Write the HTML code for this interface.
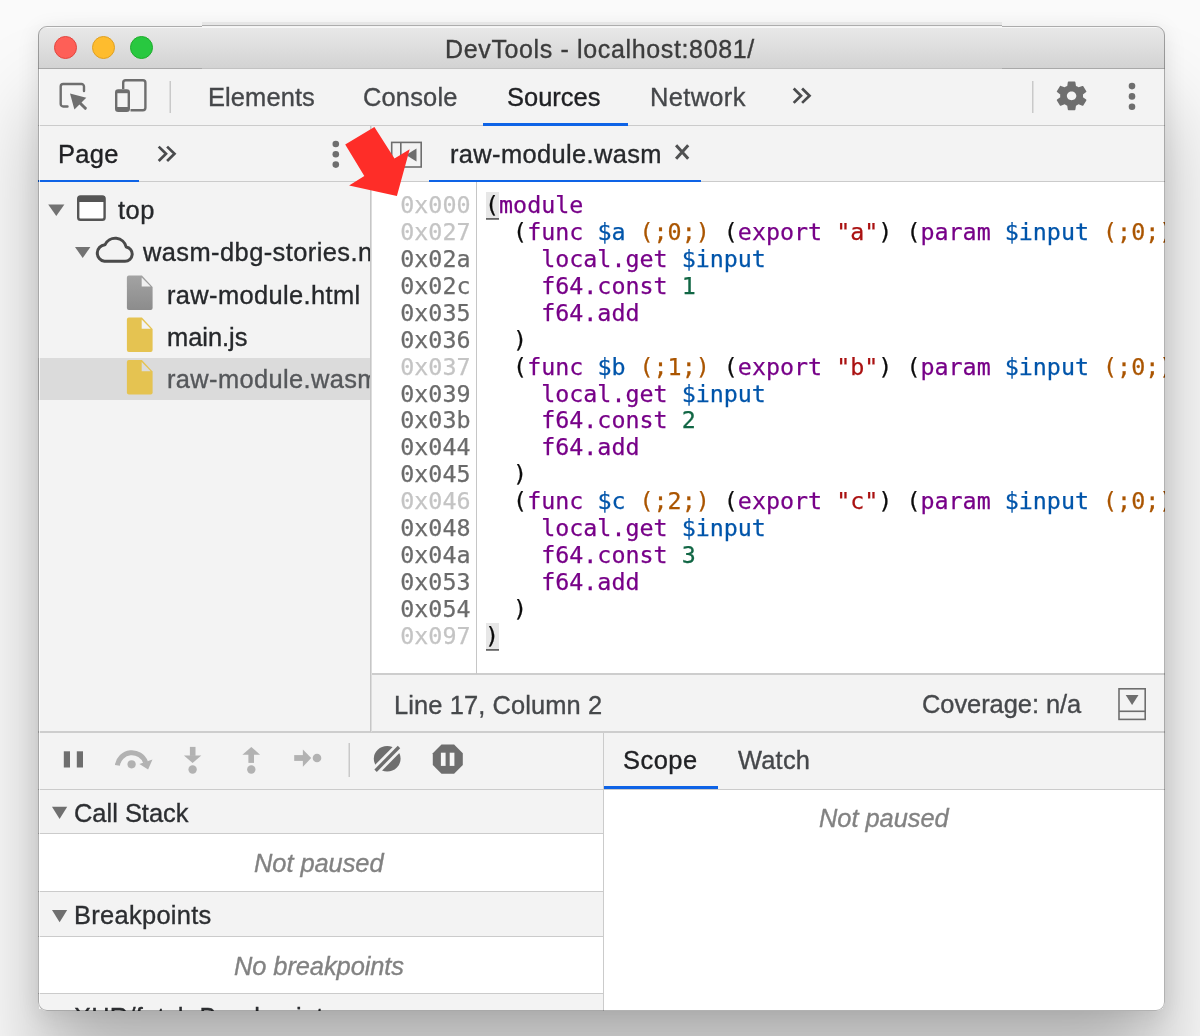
<!DOCTYPE html>
<html lang="en">
<head>
<meta charset="utf-8">
<title>DevTools - localhost:8081/</title>
<style>
html,body{margin:0;padding:0;}
body{width:1200px;height:1036px;overflow:hidden;background:#fafafa;position:relative;
  font-family:"Liberation Sans",Arial,sans-serif;font-size:25.45px;color:#333;}
.abs{position:absolute;}
#shadow{position:absolute;left:38px;top:26px;width:1127px;height:985px;border-radius:9px;
  box-shadow:0 5px 22px 0 rgba(0,0,0,0.10),0 80px 86px 0 rgba(0,0,0,0.26);}
#frame{z-index:9;position:absolute;left:38px;top:26px;width:1127px;height:985px;border-radius:9px;box-sizing:border-box;border:1px solid rgba(0,0,0,0.30);pointer-events:none;}
#win{z-index:0;position:absolute;left:38px;top:26px;width:1127px;height:985px;border-radius:9px;overflow:hidden;background:#fff;}
#win>*{position:absolute;}
.t,.ln,.cl{will-change:transform;}
.t{-webkit-text-stroke:0.35px currentColor;}
.t{position:absolute;white-space:nowrap;line-height:30px;height:30px;}
#titlebar{left:0;top:0;width:1127px;height:42px;background:linear-gradient(#e9e9e9,#d3d3d3);border-bottom:1px solid #c2c2c2;box-shadow:inset 0 2px 0 #f7f7f7;}
.light{position:absolute;top:10px;width:23px;height:23px;border-radius:50%;box-sizing:border-box;}
#toolbar{left:0;top:43px;width:1127px;height:56px;background:#f3f3f3;border-bottom:1px solid #cbcbcb;}
#sidetabs{left:0;top:100px;width:332px;height:55px;background:#f3f3f3;border-bottom:1px solid #cbcbcb;}
#edtabs{left:333px;top:100px;width:794px;height:55px;background:#f3f3f3;border-bottom:1px solid #cbcbcb;}
#vdiv1{z-index:3;left:332px;top:100px;width:2px;height:606px;background:linear-gradient(90deg,#c6c6c6 50%,#dcdcdc 50%);}
#sidebar{left:0;top:156px;width:332px;height:550px;background:#f3f3f3;}
#editor{left:333px;top:156px;width:794px;height:492px;background:#fff;overflow:hidden;}
#gutterline{z-index:3;left:438px;top:156px;width:1px;height:492px;background:#c6c6c6;}
#status{left:333px;top:647px;width:794px;height:57px;background:#f3f3f3;border-top:2px solid #cdcdcd;}
#hdiv{left:0;top:705px;width:1127px;height:2px;background:#cdcdcd;}
#dbgbar{left:0;top:707px;width:565px;height:56px;background:#f3f3f3;border-bottom:1px solid #cbcbcb;}
#vdiv2{left:565px;top:707px;width:1px;height:300px;background:#cbcbcb;}
#scopetabs{left:566px;top:707px;width:561px;height:56px;background:#f3f3f3;border-bottom:1px solid #cbcbcb;}
#scope{left:566px;top:764px;width:561px;height:230px;background:#fff;}
#dbg{left:0;top:764px;width:565px;height:230px;background:#fff;}
.sec{position:absolute;left:0;width:565px;background:#f3f3f3;border-top:1px solid #cbcbcb;border-bottom:1px solid #cbcbcb;box-sizing:border-box;}
.it{font-style:italic;color:#828282;}
.blue{position:absolute;height:3px;background:#0e63e6;}
.mono{font-family:"DejaVu Sans Mono","Liberation Mono",monospace;font-size:23.33px;}
.ln,.cl{-webkit-text-stroke:0.25px currentColor;}
.ln{position:absolute;left:0;width:99.5px;text-align:right;white-space:pre;height:27px;line-height:27px;color:#6b6b6b;}
.ln.d{color:#c4c4c4;}
.cl{position:absolute;left:114px;white-space:pre;height:27px;line-height:27px;color:#0c0c0c;}
.bm{display:inline-block;height:28px;line-height:26.9px;vertical-align:top;background:linear-gradient(#666,#666) no-repeat 1px 100% / 13.2px 1.8px, linear-gradient(#e7e7e7,#e7e7e7) no-repeat 1px 0 / 13.2px 26.2px;}
.k{color:#708;}.v{color:#05a;}.c{color:#a50;}.s{color:#a11;}.n{color:#164;}
</style>
</head>
<body>
<div id="shadow"></div>
<div id="win">
  <div id="titlebar">
    <div class="light" style="left:16px;background:#fe5f57;border:1px solid #e2463f;"></div>
    <div class="light" style="left:54px;background:#febc2e;border:1px solid #dfa023;"></div>
    <div class="light" style="left:92px;background:#28c840;border:1px solid #1dad2b;"></div>
    <div class="t" id="title" style="font-size:25px;left:407.0px;top:7.8px;color:#3c3c3c;letter-spacing:0.64px;">DevTools - localhost:8081/</div>
  </div>
  <div id="toolbar">
    <div id="tElements" class="t" style="left:170.0px;top:12.7px;color:#45474a;letter-spacing:0.11px;">Elements</div>
    <div id="tConsole" class="t" style="left:325.1px;top:12.7px;color:#45474a;letter-spacing:0.17px;">Console</div>
    <div id="tSources" class="t" style="left:469.0px;top:12.7px;color:#202124;letter-spacing:0.01px;">Sources</div>
    <div id="tNetwork" class="t" style="left:612.0px;top:12.7px;color:#45474a;letter-spacing:0.35px;">Network</div>
    <div class="blue" style="left:445px;top:54px;width:145px;"></div>
  </div>
  <div id="sidetabs">
    <div id="tPage" class="t" style="left:19.5px;top:13.2px;color:#202124;letter-spacing:0.35px;">Page</div>
    <div class="blue" style="left:0;top:54px;width:101px;"></div>
  </div>
  <div id="edtabs">
    <div id="tTab" class="t" style="left:79.0px;top:13.0px;color:#26282b;letter-spacing:0.37px;">raw-module.wasm</div>
    <div class="blue" style="left:58px;top:54px;width:272px;"></div>
  </div>
  <div id="sidebar">
    <div class="abs" style="left:0;top:176px;width:332px;height:42px;background:#dbdbdb;"></div>
    <div id="tTop" class="t" style="left:80.0px;top:12.7px;letter-spacing:0.50px;color:#26282b;">top</div>
    <div id="tWasmDbg" class="t" style="left:105.2px;top:55.2px;letter-spacing:0.42px;color:#26282b;">wasm-dbg-stories.n</div>
    <div id="tHtml" class="t" style="left:129.0px;top:97.7px;letter-spacing:0.37px;color:#26282b;">raw-module.html</div>
    <div id="tMainjs" class="t" style="left:129.0px;top:139.9px;letter-spacing:-0.03px;color:#26282b;">main.js</div>
    <div id="tWasm2" class="t" style="left:129.0px;top:182.1px;color:#55575a;letter-spacing:0.37px;">raw-module.wasm</div>
  </div>
  <div id="editor" class="mono">
<!--CODE-->
    <div class="ln d" style="top:10.0px">0x000</div><div class="cl" style="top:10.0px"><span class="bm">(</span><span class="k">module</span></div>
    <div class="ln d" style="top:36.9px">0x027</div><div class="cl" style="top:36.9px">  (<span class="k">func</span> <span class="v">$a</span> <span class="c">(;0;)</span> (<span class="k">export</span> <span class="s">&quot;a&quot;</span>) (<span class="k">param</span> <span class="v">$input</span> <span class="c">(;0;)</span> <span class="k">f64</span>) (<span class="k">result</span> <span class="k">f64</span>)</div>
    <div class="ln" style="top:63.9px">0x02a</div><div class="cl" style="top:63.9px">    <span class="k">local.get</span> <span class="v">$input</span></div>
    <div class="ln" style="top:90.8px">0x02c</div><div class="cl" style="top:90.8px">    <span class="k">f64.const</span> <span class="n">1</span></div>
    <div class="ln" style="top:117.7px">0x035</div><div class="cl" style="top:117.7px">    <span class="k">f64.add</span></div>
    <div class="ln" style="top:144.7px">0x036</div><div class="cl" style="top:144.7px">  )</div>
    <div class="ln d" style="top:171.6px">0x037</div><div class="cl" style="top:171.6px">  (<span class="k">func</span> <span class="v">$b</span> <span class="c">(;1;)</span> (<span class="k">export</span> <span class="s">&quot;b&quot;</span>) (<span class="k">param</span> <span class="v">$input</span> <span class="c">(;0;)</span> <span class="k">f64</span>) (<span class="k">result</span> <span class="k">f64</span>)</div>
    <div class="ln" style="top:198.5px">0x039</div><div class="cl" style="top:198.5px">    <span class="k">local.get</span> <span class="v">$input</span></div>
    <div class="ln" style="top:225.4px">0x03b</div><div class="cl" style="top:225.4px">    <span class="k">f64.const</span> <span class="n">2</span></div>
    <div class="ln" style="top:252.4px">0x044</div><div class="cl" style="top:252.4px">    <span class="k">f64.add</span></div>
    <div class="ln" style="top:279.3px">0x045</div><div class="cl" style="top:279.3px">  )</div>
    <div class="ln d" style="top:306.2px">0x046</div><div class="cl" style="top:306.2px">  (<span class="k">func</span> <span class="v">$c</span> <span class="c">(;2;)</span> (<span class="k">export</span> <span class="s">&quot;c&quot;</span>) (<span class="k">param</span> <span class="v">$input</span> <span class="c">(;0;)</span> <span class="k">f64</span>) (<span class="k">result</span> <span class="k">f64</span>)</div>
    <div class="ln" style="top:333.2px">0x048</div><div class="cl" style="top:333.2px">    <span class="k">local.get</span> <span class="v">$input</span></div>
    <div class="ln" style="top:360.1px">0x04a</div><div class="cl" style="top:360.1px">    <span class="k">f64.const</span> <span class="n">3</span></div>
    <div class="ln" style="top:387.0px">0x053</div><div class="cl" style="top:387.0px">    <span class="k">f64.add</span></div>
    <div class="ln" style="top:413.9px">0x054</div><div class="cl" style="top:413.9px">  )</div>
    <div class="ln d" style="top:440.9px">0x097</div><div class="cl" style="top:440.9px"><span class="bm">)</span></div>
<!--/CODE-->
  </div>
  <div id="gutterline"></div>
  <div id="vdiv1"></div>
  <div id="status">
    <div id="tLine" class="t" style="left:22.8px;top:14.6px;color:#46484b;letter-spacing:0.10px;">Line 17, Column 2</div>
    <div id="tCov" class="t" style="left:551.0px;top:13.9px;color:#46484b;letter-spacing:-0.05px;">Coverage: n/a</div>
  </div>
  <div id="hdiv"></div>
  <div id="dbgbar"></div>
  <div id="scopetabs">
    <div id="tScope" class="t" style="left:18.9px;top:11.9px;color:#202124;letter-spacing:0.50px;">Scope</div>
    <div id="tWatch" class="t" style="left:134.0px;top:11.9px;color:#45474a;letter-spacing:0.20px;">Watch</div>
    <div class="blue" style="left:0;top:53px;width:114px;"></div>
  </div>
  <div id="dbg">
    <div class="sec" style="top:-1px;height:45px;"><div id="tCall" class="t" style="left:36.0px;top:7.9px;color:#2c2e31;letter-spacing:0.00px;">Call Stack</div></div>
    <div id="tNP1" class="t it" style="left:216.0px;top:57.9px;letter-spacing:-0.06px;">Not paused</div>
    <div class="sec" style="top:101px;height:46px;"><div id="tBrk" class="t" style="left:36.0px;top:7.5px;color:#2c2e31;letter-spacing:0.30px;">Breakpoints</div></div>
    <div id="tNoBrk" class="t it" style="left:196.0px;top:161.2px;letter-spacing:-0.08px;">No breakpoints</div>
    <div class="sec" style="top:203px;height:47px;"><div id="tXhr" class="t" style="left:36.0px;top:8.2px;color:#2c2e31;letter-spacing:0.25px;">XHR/fetch Breakpoints</div></div>
  </div>
  <div id="scope">
    <div id="tNP2" class="t it" style="left:215.1px;top:12.9px;letter-spacing:-0.05px;">Not paused</div>
  </div>
  <div id="vdiv2"></div>
</div>
<div class="abs" style="left:39px;top:69px;width:1px;height:940px;background:rgba(255,255,255,0.75);z-index:8;"></div>
<div id="frame"></div>
<div class="abs" style="left:202px;top:22px;width:800px;height:3px;background:#e6e6e6;z-index:11;"></div>
<div class="abs" style="left:202px;top:25px;width:800px;height:1px;background:#adadad;z-index:11;"></div>
<div class="abs" style="left:202px;top:26px;width:800px;height:1px;background:#f4f4f4;z-index:11;"></div>
<div class="abs" style="left:39px;top:68px;width:163px;height:1px;background:#a9a9a9;"></div>
<div class="abs" style="left:1002px;top:68px;width:162px;height:1px;background:#a9a9a9;"></div>
<!--ICONS-->
<svg id="icons" width="1200" height="1036" viewBox="0 0 1200 1036" style="position:absolute;left:0;top:0;pointer-events:none;z-index:10;">
  <!-- inspect -->
  <g fill="none" stroke="#6e6e6e" stroke-width="2.4" stroke-linecap="round" stroke-linejoin="round">
    <path d="M84,91 V86.5 a2.5,2.5 0 0 0 -2.5,-2.5 H63.200 a2.5,2.5 0 0 0 -2.5,2.5 V104 a2.5,2.5 0 0 0 2.5,2.500 H67.500"/>
    <path d="M79,102 L85.300,108.300" stroke-width="3"/>
  </g>
  <polygon points="70,93.500 86.300,97.800 74.400,109.400" fill="#6e6e6e"/>
  <!-- device -->
  <g fill="none" stroke="#6e6e6e" stroke-width="2.400" stroke-linejoin="round">
    <path d="M123.200,89 V82.700 a2.500,2.500 0 0 1 2.500,-2.500 H142.900 a2.500,2.500 0 0 1 2.500,2.500 V107.800 a2.500,2.500 0 0 1 -2.500,2.500 H130.500"/>
    <rect x="116.200" y="90.500" width="12.600" height="20.200" rx="2"/>
  </g>
  <rect x="116.200" y="90" width="12.600" height="3.200" fill="#6e6e6e"/>
  <rect x="116.200" y="107" width="12.600" height="4" fill="#6e6e6e"/>
  <!-- separators -->
  <rect x="169.500" y="81" width="1.500" height="32" fill="#c9c9c9"/>
  <rect x="1032" y="81" width="1.500" height="32" fill="#c9c9c9"/>
  <rect x="348.500" y="743" width="1.500" height="34" fill="#c9c9c9"/>
  <!-- chevrons -->
  <g fill="none" stroke="#4a4b4d" stroke-width="2.700">
    <path d="M793.700,88.500 L801,95.700 L793.700,102.900 M802.100,88.500 L809.500,95.700 L802.100,102.900"/>
    <path d="M158.700,146.600 L166,153.800 L158.700,161 M167.100,146.600 L174.500,153.800 L167.100,161"/>
  </g>
  <!-- gear -->
  <g transform="translate(1053.300,78.700) scale(1.525,1.430)" fill="#6e6e6e">
    <path d="M19.430 12.980c.04-.32.070-.64.070-.98s-.03-.66-.07-.98l2.110-1.650c.19-.15.240-.42.120-.64l-2-3.460c-.12-.22-.39-.30-.61-.22l-2.490 1c-.52-.40-1.080-.73-1.690-.98l-.38-2.650C14.460 2.180 14.250 2 14 2h-4c-.25 0-.46.180-.49.420l-.38 2.650c-.61.250-1.170.59-1.690.98l-2.490-1c-.23-.09-.49 0-.61.220l-2 3.460c-.13.220-.07.490.12.640l2.110 1.650c-.04.320-.07.650-.07.980s.03.660.07.980l-2.110 1.650c-.19.150-.24.420-.12.640l2 3.460c.12.220.39.300.61.220l2.490-1c.52.400 1.080.73 1.690.98l.38 2.650c.03.240.24.420.49.420h4c.25 0 .46-.18.490-.42l.38-2.650c.61-.25 1.170-.59 1.690-.98l2.490 1c.23.090.49 0 .61-.22l2-3.460c.12-.22.070-.49-.12-.64l-2.110-1.650zM12 15.100c-1.710 0-3.100-1.390-3.100-3.100s1.390-3.100 3.100-3.100 3.100 1.390 3.100 3.100-1.390 3.100-3.100 3.100z"/>
  </g>
  <!-- kebab dots -->
  <g fill="#6e6e6e">
    <circle cx="1132" cy="86.100" r="3.300"/><circle cx="1132" cy="96.400" r="3.300"/><circle cx="1132" cy="106.800" r="3.300"/>
    <circle cx="335.800" cy="144" r="3.300"/><circle cx="335.800" cy="154.300" r="3.300"/><circle cx="335.800" cy="164.600" r="3.300"/>
  </g>
  <!-- toggle navigator -->
  <g>
    <rect x="391.700" y="142.400" width="29.500" height="24.600" fill="none" stroke="#6e6e6e" stroke-width="1.600"/>
    <rect x="400" y="142.400" width="1.600" height="24.600" fill="#6e6e6e"/>
    <polygon points="416.500,148.500 416.500,161.500 406,155" fill="#6e6e6e"/>
  </g>
  <!-- close x -->
  <path d="M676.100,145.300 L688.200,158.700 M688.200,145.300 L676.100,158.700" stroke="#505152" stroke-width="3" fill="none"/>
  <!-- tree triangles -->
  <polygon points="48.200,204.500 64.400,204.500 56.300,216" fill="#727272"/>
  <polygon points="75,247 90.400,247 82.700,258" fill="#727272"/>
  <!-- frame icon -->
  <rect x="78.200" y="196.400" width="26.400" height="23.400" rx="2.300" fill="#fff" stroke="#555" stroke-width="2.400"/>
  <rect x="78.200" y="196" width="26.400" height="6" fill="#555"/>
  <!-- cloud -->
  <path d="M104.500,261.300 H125 a7.200,7.200 0 0 0 1.200,-14.300 a11.300,11.300 0 0 0 -21.300,-2.200 a8.300,8.300 0 0 0 -0.400,16.500 z" fill="none" stroke="#4a4a4a" stroke-width="3" stroke-linejoin="round"/>
  <!-- file icons -->
  <linearGradient id="gg" x1="0" y1="0" x2="0" y2="1"><stop offset="0" stop-color="#a3a3a3"/><stop offset="1" stop-color="#8c8c8c"/></linearGradient>
  <g transform="translate(126.900,275.400)"><path d="M2,0 H15 L25.700,11.500 V32.500 a2,2 0 0 1 -2,2 H2 a2,2 0 0 1 -2,-2 V2 a2,2 0 0 1 2,-2 z" fill="url(#gg)"/><polygon points="14.800,2 14.800,11.200 23.800,11.200" fill="#f1f1f1"/></g>
  <g transform="translate(126.900,317.600)"><path d="M2,0 H15 L25.700,11.500 V32.500 a2,2 0 0 1 -2,2 H2 a2,2 0 0 1 -2,-2 V2 a2,2 0 0 1 2,-2 z" fill="#e5c351"/><polygon points="14.800,2 14.800,11.200 23.800,11.200" fill="#f3f3f3"/></g>
  <g transform="translate(126.900,360)"><path d="M2,0 H15 L25.700,11.500 V32.500 a2,2 0 0 1 -2,2 H2 a2,2 0 0 1 -2,-2 V2 a2,2 0 0 1 2,-2 z" fill="#e5c351"/><polygon points="14.800,2 14.800,11.200 23.800,11.200" fill="#dcdcdc"/></g>
  <!-- coverage icon -->
  <rect x="1119" y="688.800" width="26.200" height="30.600" fill="none" stroke="#6e6e6e" stroke-width="1.600"/>
  <rect x="1119" y="710.500" width="26.200" height="1.600" fill="#6e6e6e"/>
  <polygon points="1125.700,695 1138.500,695 1132.100,705" fill="#6e6e6e"/>
  <!-- debugger: pause -->
  <rect x="63.800" y="751.300" width="6.200" height="16.200" fill="#6e6e6e"/>
  <rect x="76.800" y="751.300" width="6.200" height="16.200" fill="#6e6e6e"/>
  <!-- step over -->
  <g fill="#b2b2b2">
    <path d="M117.400,765.400 A14.600,14.600 0 0 1 145.600,762.400" fill="none" stroke="#b2b2b2" stroke-width="5"/>
    <polygon points="139.400,764 152.500,759.400 148.100,769.400"/>
    <circle cx="131.600" cy="764.300" r="4.100"/>
    <!-- step into -->
    <rect x="189.900" y="746.900" width="5.600" height="9"/>
    <polygon points="183.900,755.400 201.300,755.400 192.600,763"/>
    <circle cx="192.600" cy="769.500" r="4.200"/>
    <!-- step out -->
    <rect x="248.400" y="754" width="5.600" height="8.900"/>
    <polygon points="242.400,754.700 260.100,754.700 251.300,746.900"/>
    <circle cx="251.300" cy="769.500" r="4.200"/>
    <!-- step -->
    <rect x="294.200" y="755.100" width="9.500" height="5.800"/>
    <polygon points="302.900,749.400 302.900,766.800 311.200,758"/>
    <circle cx="317" cy="758" r="4.300"/>
  </g>
  <!-- deactivate breakpoints -->
  <g>
    <ellipse cx="387.200" cy="758.800" rx="13.400" ry="12.700" fill="#6e6e6e"/>
    <path d="M376,770.300 L398.600,747.400" stroke="#f3f3f3" stroke-width="9"/>
    <path d="M375.600,770.700 L399,747" stroke="#6e6e6e" stroke-width="3.400"/>
  </g>
  <!-- pause on exceptions -->
  <polygon points="441.500,744.600 454.100,744.600 462.800,753.300 462.800,765 454.100,773.700 441.500,773.700 432.800,765 432.800,753.300" fill="#6e6e6e"/>
  <rect x="440.900" y="752.700" width="4.700" height="13.200" fill="#f6f6f6"/>
  <rect x="449.700" y="752.700" width="4.700" height="13.200" fill="#f6f6f6"/>
  <!-- section triangles -->
  <polygon points="52,806.800 67.200,806.800 59.600,819" fill="#6f6f6f"/>
  <polygon points="52,910 67.200,910 59.600,922.300" fill="#6f6f6f"/>
  <!-- red arrow -->
  <polygon points="374.400,127 345.200,144.600 364.300,176.100 349.100,185.500 396.900,195.900 409.700,149.300 394.500,158.500" fill="#fe2d28"/>
</svg>
<!--/ICONS-->
</body>
</html>
